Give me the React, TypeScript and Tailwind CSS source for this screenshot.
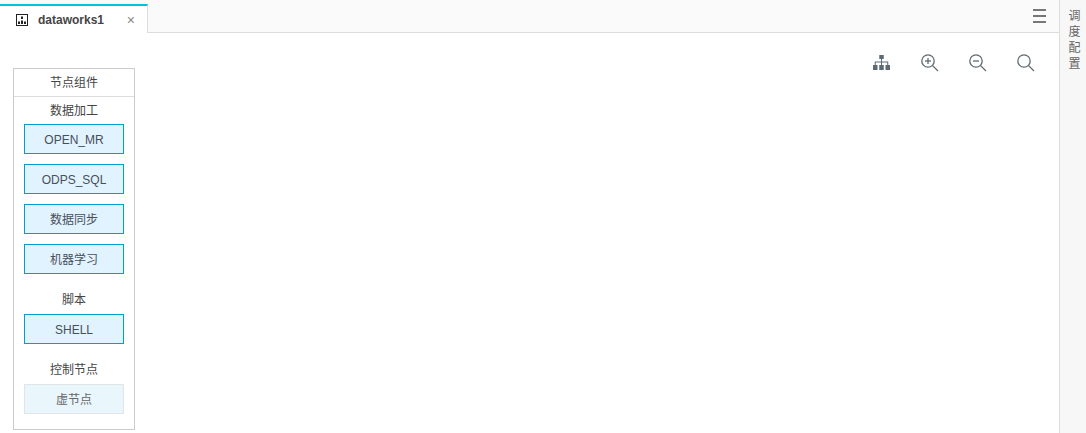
function NodeButton({ label, faded }: { label: string; faded?: boolean }) {
  return (
    <div
      className={
        faded
          ? "w-[100px] h-[30px] pt-px flex items-center justify-center border border-[#e1e5e8] bg-[#e9f7fd] text-[#666]"
          : "w-[100px] h-[30px] pt-px flex items-center justify-center border border-[#00a0cc] bg-[#e1f3ff] text-[#484f5a]"
      }
    >
      {label}
    </div>
  );
}

function ZoomIcon({ mark }: { mark?: "plus" | "minus" }) {
  return (
    <svg width="18" height="18" viewBox="0 0 18 18" fill="none" stroke="#5f6b73" strokeWidth="1.3">
      <circle cx="7" cy="7" r="6.2" />
      <path d="M11.6 11.6L17 17" />
      {mark && <path d="M4 7H10" />}
      {mark === "plus" && <path d="M7 4V10" />}
    </svg>
  );
}

export default function App() {
  return (
    <div className="flex h-[433px] w-[1086px] overflow-hidden bg-white text-[12px] text-[#444] font-['Liberation_Sans','Noto_Sans_CJK_SC',sans-serif]">
      <div className="flex-1 flex flex-col">
        {/* Tabs */}
        <div className="h-[33px] flex bg-[#fafafa] border-b border-[#dddddd]">
          <div className="w-[148px] h-[29px] mt-[4px] bg-white border-t-2 border-t-[#00c1de] border-r border-r-[#dddddd] flex items-center pl-[16px] pr-[12px]">
            <svg width="12" height="12" viewBox="0 0 12 12" className="shrink-0">
              <rect x="0.5" y="0.5" width="11" height="11" fill="none" stroke="#222" />
              <path d="M5 2.5h2V5H5zM2 7.5h2V10H2zM5 6.5h2V10H5zM8 7.5h2V10H8z" fill="#222" />
            </svg>
            <span className="ml-[10px] font-bold text-[#444]">dataworks1</span>
            <span className="ml-auto text-[#888] text-[14px] leading-none">×</span>
          </div>
          <div className="ml-auto mr-[13px] mt-[9px] flex flex-col gap-[4px] w-[13px]">
            <div className="h-[2px] bg-[#777]" />
            <div className="h-[2px] bg-[#777]" />
            <div className="h-[2px] bg-[#777]" />
          </div>
        </div>

        <div className="flex-1 flex flex-col pl-[13px]">
          {/* Toolbar */}
          <div className="flex justify-end items-center gap-[30px] pr-[24px] h-[36px] mt-[12px]">
            <svg width="18" height="16" viewBox="0 0 18 16" fill="#5f6b73">
              <rect x="6.25" y="0" width="4.5" height="4" />
              <rect x="0" y="10" width="4.5" height="5" />
              <rect x="6.25" y="10" width="4.5" height="5" />
              <rect x="12.5" y="10" width="4.5" height="5" />
              <path d="M8 4h1v2.5h6.25V10h-1V7.5H9V10H8V7.5H2.75V10h-1V6.5H8z" />
            </svg>
            <ZoomIcon mark="plus" />
            <ZoomIcon mark="minus" />
            <ZoomIcon />
          </div>

          {/* Node palette */}
          <div className="w-[122px] h-[362px] -mt-[13px] border border-[#cccccc] flex flex-col">
            <div className="h-[28px] shrink-0 flex items-center justify-center border-b border-[#dddddd]">节点组件</div>
            <div className="flex flex-col items-center">
              <div className="h-[27px] flex items-center">数据加工</div>
              <div className="flex flex-col gap-[10px]">
                <NodeButton label="OPEN_MR" />
                <NodeButton label="ODPS_SQL" />
                <NodeButton label="数据同步" />
                <NodeButton label="机器学习" />
              </div>
              <div className="h-[40px] pt-[12px] flex items-center">脚本</div>
              <NodeButton label="SHELL" />
              <div className="h-[40px] pt-[12px] flex items-center">控制节点</div>
              <NodeButton label="虚节点" faded />
            </div>
          </div>
        </div>
      </div>

      {/* Right rail */}
      <div className="w-[27px] shrink-0 bg-[#f7f7f7] border-l border-[#dddddd] flex flex-col items-center pt-[8px] pl-[3px] text-[#666] leading-[16px]">
        <span>调</span>
        <span>度</span>
        <span>配</span>
        <span>置</span>
      </div>
    </div>
  );
}
